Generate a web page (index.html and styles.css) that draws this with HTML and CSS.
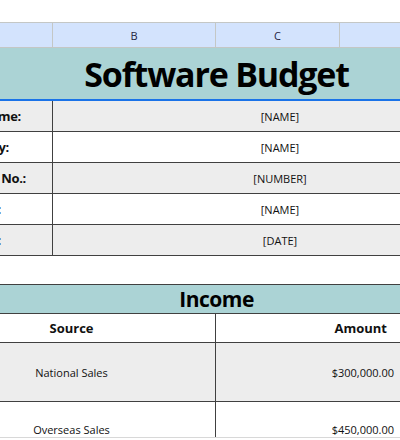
FILE: index.html
```html
<!DOCTYPE html>
<html>
<head>
<meta charset="utf-8">
<link rel="stylesheet" href="styles.css">
</head>
<body>
<div class="page">
  <div class="blank"></div>
  <div class="colhead">
    <div class="ch ch-a"></div>
    <div class="ch ch-b">B</div>
    <div class="ch ch-c">C</div>
    <div class="ch ch-d"></div>
  </div>
  <div class="title"><span class="title-text">Software Budget</span></div>
  <div class="info">
    <div class="row shade"><div class="lab lab1">Project Name:</div><div class="val">[NAME]</div></div>
    <div class="row"><div class="lab lab2">Prepared by:</div><div class="val">[NAME]</div></div>
    <div class="row shade"><div class="lab lab3">Invoice No.:</div><div class="val">[NUMBER]</div></div>
    <div class="row"><div class="lab lab4">Client:</div><div class="val">[NAME]</div></div>
    <div class="row shade"><div class="lab lab5">Date:</div><div class="val">[DATE]</div></div>
  </div>
  <div class="gap"></div>
  <div class="income">
    <div class="inc-head"><span class="inc-title">Income</span></div>
    <div class="irow hdr"><div class="src">Source</div><div class="amt">Amount</div></div>
    <div class="irow shade tall"><div class="src">National Sales</div><div class="amt num">$300,000.00</div></div>
    <div class="irow last"><div class="src">Overseas Sales</div><div class="amt num">$450,000.00</div></div>
  </div>
  <div class="bottom"></div>
</div>
</body>
</html>
```
FILE: styles.css
```css
html, body { margin: 0; padding: 0; background: #fff; }
.page {
  width: 400px; height: 440px; overflow: hidden;
  font-family: "Open Sans", "Liberation Sans", sans-serif;
  color: #111;
}
.blank { height: 22px; }
.colhead {
  display: grid;
  grid-template-columns: 53px 163px 124px 60px;
  height: 24px;
  background: #d3e3fd;
  border-top: 1px solid #c4c7c5;
  border-bottom: 1px solid #c4c7c5;
}
.ch {
  display: flex; align-items: center; justify-content: center;
  font-size: 11px; color: #1f1f3f;
  border-right: 1px solid #c4c7c5;
}
.ch-d { border-right: none; }
.title {
  height: 51px;
  background: #abd3d5;
  border-bottom: 2px solid #1a73e8;
  width: 433px;
  display: flex; align-items: center; justify-content: center;
}
.title-text {
  font-size: 34px; font-weight: 700; color: #000;
  letter-spacing: -1.2px;
}
.row {
  display: grid;
  grid-template-columns: 53px 454px;
  height: 30px;
  border-bottom: 1px solid #404040;
}
.shade { background: #ededed; }
.lab {
  border-right: 1px solid #404040;
  font-size: 13px; font-weight: 700; color: #111;
  display: flex; align-items: center; justify-content: flex-end;
  overflow: hidden; white-space: nowrap;
  letter-spacing: -0.3px;
}
.lab1 { padding-right: 31px; }
.lab2 { padding-right: 43px; }
.lab3 { padding-right: 26px; }
.lab4 { padding-right: 51px; }
.lab5 { padding-right: 51px; }
.val {
  font-size: 11px;
  display: flex; align-items: center; justify-content: center;
}
.gap { height: 28px; }
.income { border-top: 1px solid #404040; }
.inc-head {
  height: 28px; width: 433px;
  background: #abd3d5;
  border-bottom: 1px solid #404040;
  display: flex; align-items: center; justify-content: center;
}
.inc-title { font-size: 21px; font-weight: 700; color: #000; letter-spacing: -0.5px; }
.irow {
  display: grid;
  grid-template-columns: 216px 184px;
  border-bottom: 1px solid #404040;
}
.irow.hdr { height: 28px; font-size: 13px; font-weight: 700; }
.irow.tall { height: 58px; }
.irow.last { height: 35px; border-bottom: 1px solid #d8d8d8; }
.src {
  border-right: 1px solid #404040;
  display: flex; align-items: center; justify-content: center;
  padding-right: 72px;
}
.amt {
  display: flex; align-items: center; justify-content: flex-end;
  padding-right: 13px;
}
.num { font-size: 11px; padding-right: 6px; }
.irow.tall .src, .irow.last .src { font-size: 11px; }
.irow.last .src, .irow.last .amt { align-items: flex-end; padding-bottom: 0; }
.bottom { height: 4px; background: #fff; }
```
